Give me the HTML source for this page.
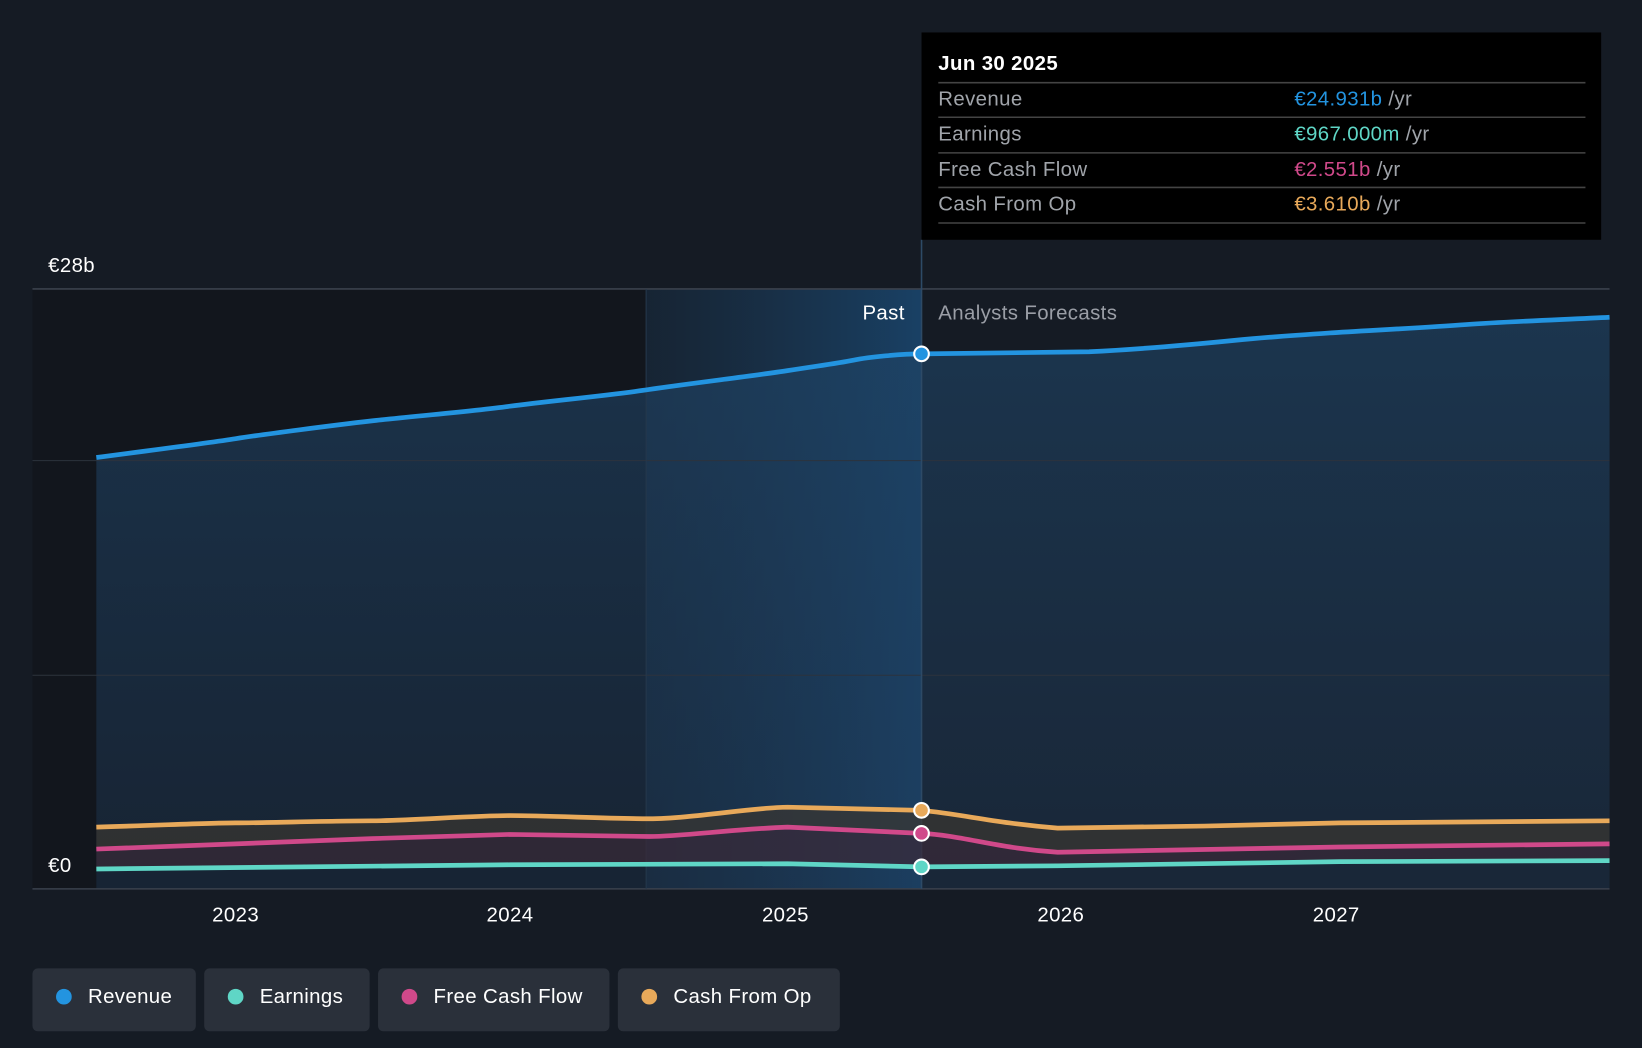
<!DOCTYPE html>
<html><head><meta charset="utf-8"><style>
html,body{margin:0;padding:0;background:#151b24;}
svg{display:block;font-family:"Liberation Sans",Arial,sans-serif;}
text{letter-spacing:0.35px;}
</style></head><body>
<svg width="1642" height="1048" viewBox="0 0 1568 1001" preserveAspectRatio="none" xmlns="http://www.w3.org/2000/svg">
<defs>
<linearGradient id="hl" x1="0" x2="1" y1="0" y2="0">
<stop offset="0" stop-color="#1a3a58" stop-opacity="0.3"/>
<stop offset="1" stop-color="#1a4a75" stop-opacity="0.8"/>
</linearGradient>
<linearGradient id="rev" x1="0" x2="0" y1="0" y2="1">
<stop offset="0" stop-color="#1f4466" stop-opacity="0.75"/>
<stop offset="1" stop-color="#1f3a58" stop-opacity="0.45"/>
</linearGradient>
</defs>
<rect width="1568" height="1001" fill="#151b24"/>
<rect x="31" y="276" width="586" height="573" fill="#12161d"/>
<rect x="617" y="276" width="263" height="573" fill="url(#hl)"/>
<path d="M92,437 C160,428 200,423 225,419 S320,406 355,402 S450,393 487,388 S580,378 620,372 S720,359 752,354 S800,347 815,344 S860,338 880,338 L1040,336 C1100,333 1150,328 1180,325 S1240,320 1270,318 S1360,313 1400,310 S1500,305 1537,303 L1537,849 L92,849 Z" fill="url(#rev)" opacity="0.85"/>
<line x1="31" y1="276" x2="1537" y2="276" stroke="#3a414c" stroke-width="1.5"/>
<line x1="31" y1="440" x2="1537" y2="440" stroke="#2c333d" stroke-width="1"/>
<line x1="31" y1="645" x2="1537" y2="645" stroke="#2c333d" stroke-width="1"/>
<line x1="31" y1="849" x2="1537" y2="849" stroke="#3a414c" stroke-width="1.5"/>
<line x1="880" y1="229" x2="880" y2="849" stroke="#2d4a66" stroke-width="1.5"/>
<line x1="617" y1="276" x2="617" y2="849" stroke="#25384c" stroke-width="1"/>
<path d="M92,790 C160,788 200,786 225,786 S320,784 355,784 S450,779 487,779 S580,782 620,782 S720,771 752,771 L880,774 C920,778 950,786 1010,791 L1150,789 L1280,786 L1537,784 L1537,806 L1280,809 L1010,814 C950,810 920,798 880,796 L752,790 C700,792 650,799 620,799 L487,797 L355,801 L225,806 L92,811 Z" fill="#3a3630" opacity="0.7"/>
<path d="M92,811 L225,806 L355,801 L487,797 L620,799 C650,799 700,792 752,790 L880,796 C920,798 950,810 1010,814 L1280,809 L1537,806 L1537,822 L1280,823 L1010,827 L880,828 L752,825 L487,826 L92,830 Z" fill="#3a2a38" opacity="0.7"/>
<path d="M92,437 C160,428 200,423 225,419 S320,406 355,402 S450,393 487,388 S580,378 620,372 S720,359 752,354 S800,347 815,344 S860,338 880,338 L1040,336 C1100,333 1150,328 1180,325 S1240,320 1270,318 S1360,313 1400,310 S1500,305 1537,303" fill="none" stroke="#2394e0" stroke-width="4.5"/>
<path d="M92,790 C160,788 200,786 225,786 S320,784 355,784 S450,779 487,779 S580,782 620,782 S720,771 752,771 L880,774 C920,778 950,786 1010,791 L1150,789 L1280,786 L1537,784" fill="none" stroke="#e8a95a" stroke-width="4.5"/>
<path d="M92,811 L225,806 L355,801 L487,797 L620,799 C650,799 700,792 752,790 L880,796 C920,798 950,810 1010,814 L1280,809 L1537,806" fill="none" stroke="#d0498a" stroke-width="4.5"/>
<path d="M92,830 L487,826 L752,825 L880,828 L1010,827 L1280,823 L1537,822" fill="none" stroke="#5fd6c6" stroke-width="4.5"/>
<circle cx="880" cy="338" r="7" fill="#2394e0" stroke="#fff" stroke-width="2"/>
<circle cx="880" cy="774" r="7" fill="#e8a95a" stroke="#fff" stroke-width="2"/>
<circle cx="880" cy="796" r="7" fill="#d0498a" stroke="#fff" stroke-width="2"/>
<circle cx="880" cy="828" r="7" fill="#5fd6c6" stroke="#fff" stroke-width="2"/>
<text x="46" y="260" fill="#fff" font-size="19.5">€28b</text>
<text x="46" y="833" fill="#fff" font-size="19.5">€0</text>
<text x="864" y="305" fill="#fff" font-size="19.5" text-anchor="end">Past</text>
<text x="896" y="305" fill="#9a9ea6" font-size="19.5">Analysts Forecasts</text>
<g fill="#fff" font-size="19.5" text-anchor="middle">
<text x="225" y="880">2023</text><text x="487" y="880">2024</text><text x="750" y="880">2025</text><text x="1013" y="880">2026</text><text x="1276" y="880">2027</text>
</g>
<rect x="880" y="31" width="649" height="198" fill="#000"/>
<text x="896" y="67" fill="#fff" font-size="19.5" font-weight="bold">Jun 30 2025</text>
<g stroke="#444" stroke-width="1.5">
<line x1="896" y1="79" x2="1514" y2="79"/><line x1="896" y1="112" x2="1514" y2="112"/><line x1="896" y1="146" x2="1514" y2="146"/><line x1="896" y1="179" x2="1514" y2="179"/><line x1="896" y1="213" x2="1514" y2="213"/>
</g>
<g font-size="19.5" fill="#a0a4aa">
<text x="896" y="101">Revenue</text><text x="896" y="134">Earnings</text><text x="896" y="168">Free Cash Flow</text><text x="896" y="201">Cash From Op</text>
</g>
<g font-size="19.5">
<text x="1236" y="101"><tspan fill="#2394e0">€24.931b</tspan><tspan fill="#a0a4aa"> /yr</tspan></text>
<text x="1236" y="134"><tspan fill="#5fd6c6">€967.000m</tspan><tspan fill="#a0a4aa"> /yr</tspan></text>
<text x="1236" y="168"><tspan fill="#d0498a">€2.551b</tspan><tspan fill="#a0a4aa"> /yr</tspan></text>
<text x="1236" y="201"><tspan fill="#e8a95a">€3.610b</tspan><tspan fill="#a0a4aa"> /yr</tspan></text>
</g>
<g font-size="19.5" fill="#fff">
<rect x="31" y="925" width="156" height="60" rx="5" fill="#2a303a"/><circle cx="61" cy="952" r="7.5" fill="#2394e0"/><text x="84" y="958">Revenue</text>
<rect x="195" y="925" width="158" height="60" rx="5" fill="#2a303a"/><circle cx="225" cy="952" r="7.5" fill="#5fd6c6"/><text x="248" y="958">Earnings</text>
<rect x="361" y="925" width="221" height="60" rx="5" fill="#2a303a"/><circle cx="391" cy="952" r="7.5" fill="#d0498a"/><text x="414" y="958">Free Cash Flow</text>
<rect x="590" y="925" width="212" height="60" rx="5" fill="#2a303a"/><circle cx="620" cy="952" r="7.5" fill="#e8a95a"/><text x="643" y="958">Cash From Op</text>
</g>
</svg>
</body></html>
